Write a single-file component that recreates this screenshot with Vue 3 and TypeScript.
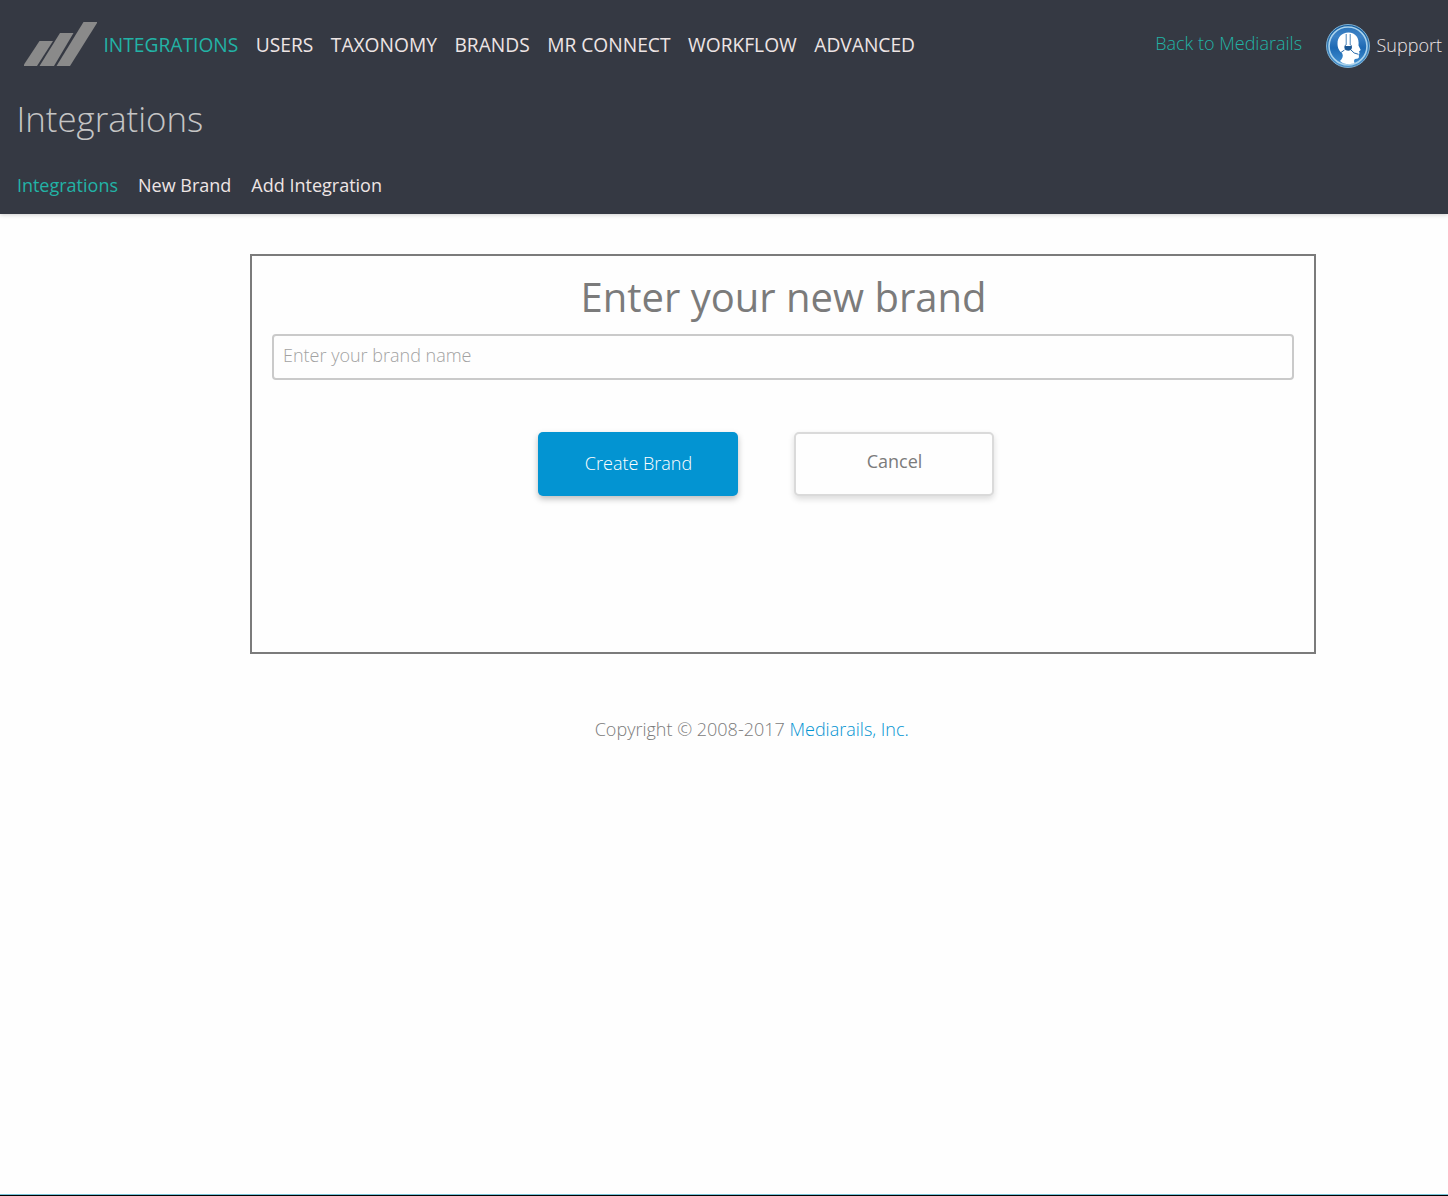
<script setup lang="ts">
import { ref } from 'vue'

const mainNav: string[] = ['Integrations', 'Users', 'Taxonomy', 'Brands', 'MR Connect', 'Workflow', 'Advanced']
const subNav: string[] = ['Integrations', 'New Brand', 'Add Integration']
const brandName = ref<string>('')
</script>

<template>
  <div class="page">
    <header class="header">
      <div class="topbar">
        <svg class="logo" width="74" height="44" viewBox="0 0 74 44" fill="#8a8a8a">
          <path d="M0 44V42.5L15.500 19H29L13 44Z" />
          <path d="M15.5 44L36 11H49.5L30 44Z" />
          <path d="M32.5 44L59.500 0H73V1L46 44Z" />
        </svg>
        <nav class="main-nav">
          <a v-for="(item, i) in mainNav" :key="item" :class="{ active: i === 0 }">{{ item }}</a>
        </nav>
        <a class="back">Back to Mediarails</a>
        <a class="support">
          <svg width="44" height="44" viewBox="0 0 44 44">
            <defs>
              <linearGradient id="badge" x1="0" y1="0" x2="0" y2="1">
                <stop offset="0" stop-color="#2c74ba" />
                <stop offset="0.25" stop-color="#3c82c6" />
                <stop offset="0.55" stop-color="#1d69b3" />
                <stop offset="1" stop-color="#4391d2" />
              </linearGradient>
              <linearGradient id="rim" x1="0" y1="0" x2="0" y2="1">
                <stop offset="0" stop-color="#125b9c" />
                <stop offset="1" stop-color="#4a92cc" />
              </linearGradient>
            </defs>
            <circle cx="22" cy="22" r="21.500" fill="url(#rim)" stroke="#7fb0d2" stroke-width="1" />
            <circle cx="22" cy="22" r="19" fill="url(#badge)" stroke="#a9d2ec" stroke-width="1.600" />
            <path fill="#fff" d="M22.500 8.500C15.500 8.500 11.500 13.500 11.500 19.500C11.500 24.500 13.300 26.800 16.300 29.500C17.500 32 16.500 34.500 14 37C17.500 40.500 24.500 41 28.500 39C27.500 36.500 28 34.800 30.500 34.800C33 34.800 33.200 33.500 32.800 31L33.600 29L33 27.500L34.700 26L32.500 21.500C33.500 14 29.500 8.500 22.500 8.500Z" />
            <path fill="none" stroke="#4c86bb" stroke-width="1" d="M20.200 10V21M24.200 10V21" />
            <path fill="#1b5795" d="M19.700 20.500C17.800 21.500 18 25.300 20 26.200C21.200 26.800 23.200 26.800 24.300 26.200C26.400 25.300 26.500 21.500 24.700 20.500V22H19.700Z" />
            <path fill="none" stroke="#2b6cab" stroke-width="1" d="M18.500 26L14.500 28.800M25 26Q27.500 29.800 32.500 30.300" />
          </svg>
          <span>Support</span>
        </a>
      </div>
      <h1 class="title">Integrations</h1>
      <nav class="sub-nav">
        <a v-for="(item, i) in subNav" :key="item" :class="{ active: i === 0 }">{{ item }}</a>
      </nav>
    </header>

    <main class="panel">
      <h2>Enter your new brand</h2>
      <input v-model="brandName" type="text" placeholder="Enter your brand name" />
      <div class="actions">
        <button class="create">Create Brand</button>
        <button class="cancel">Cancel</button>
      </div>
    </main>

    <footer class="footer">Copyright © 2008-2017 <a>Mediarails, Inc.</a></footer>
  </div>
</template>

<style>
body {
  background: #fefefe;
}
</style>

<style scoped>
.page {
  display: flex;
  flex-direction: column;
  box-sizing: border-box;
  width: 1448px;
  height: 1196px;
  overflow: hidden;
  font-family: 'Open Sans', sans-serif;
  font-size: 18px;
  font-weight: 300;
  background: #fefefe;
  border-bottom: 1px solid #000;
  box-shadow: inset 0 -1px #79c3d8;
}
.header {
  box-sizing: border-box;
  flex: none;
  height: 214px;
  background: #353943;
  box-shadow: 0 1px 4px rgba(0, 0, 0, 0.18);
}
.topbar {
  display: flex;
  align-items: flex-start;
  padding: 22px 6px 0 24px;
  height: 68px;
}
.logo {
  flex: none;
}
.main-nav {
  display: flex;
  gap: 17.5px;
  padding: 9px 0 0 5.5px;
  font-size: 19.2px;
  font-weight: 400;
  line-height: 28px;
  text-transform: uppercase;
  white-space: nowrap;
  color: #eee5e5;
}
.active {
  color: #22b3a6;
}
.back {
  margin-left: auto;
  padding-top: 7px;
  line-height: 28px;
  color: #22b3a6;
}
.support {
  display: flex;
  margin: 2px 0 0 24px;
  gap: 6.5px;
  line-height: 42px;
  color: #eee5e5;
}
.title {
  margin: 0;
  padding: 5px 0 0 16.500px;
  font-size: 34.8px;
  font-weight: 300;
  line-height: 48px;
  color: #c5c5c5;
}
.sub-nav {
  display: flex;
  gap: 20px;
  padding: 28px 0 0 16.900px;
  font-weight: 400;
  line-height: 28px;
  color: #eee5e5;
}
.panel {
  display: flex;
  flex-direction: column;
  box-sizing: border-box;
  flex: none;
  width: 1066px;
  height: 400px;
  margin: 40px 0 0 250px;
  padding: 0 20px;
  border: 2px solid #7b7b7b;
}
h2 {
  margin: 13px 0 9px;
  padding-left: 1px;
  font-size: 40px;
  font-weight: 400;
  line-height: 56px;
  text-align: center;
  color: #7b7b7b;
}
input {
  box-sizing: border-box;
  width: 100%;
  height: 46px;
  padding: 0 9px 4px;
  font: inherit;
  border: 2px solid #cacaca;
  border-radius: 4px;
  background: #fefefe;
}
input::placeholder {
  color: #a2a2a2;
  opacity: 1;
}
.actions {
  display: flex;
  gap: 56px;
  margin: 52px 0 0 266px;
}
button {
  box-sizing: border-box;
  width: 200px;
  height: 64px;
  padding: 0 0 2px 1px;
  font: inherit;
  border: 0;
  border-radius: 5px;
}
.create {
  color: #fff;
  background: #0394d2;
  box-shadow: 0 3px 6px rgba(0, 0, 0, 0.26);
}
.cancel {
  padding-bottom: 6px;
  font-weight: 400;
  color: #7b7b7b;
  background: #fefefe;
  border: 2px solid #dadada;
  box-shadow: 0 3px 6px rgba(0, 0, 0, 0.14);
}
.footer {
  margin: 61px 0 0 594.700px;
  line-height: 28px;
  color: #7b7b7b;
}
.footer a {
  color: #0394d2;
}
</style>
